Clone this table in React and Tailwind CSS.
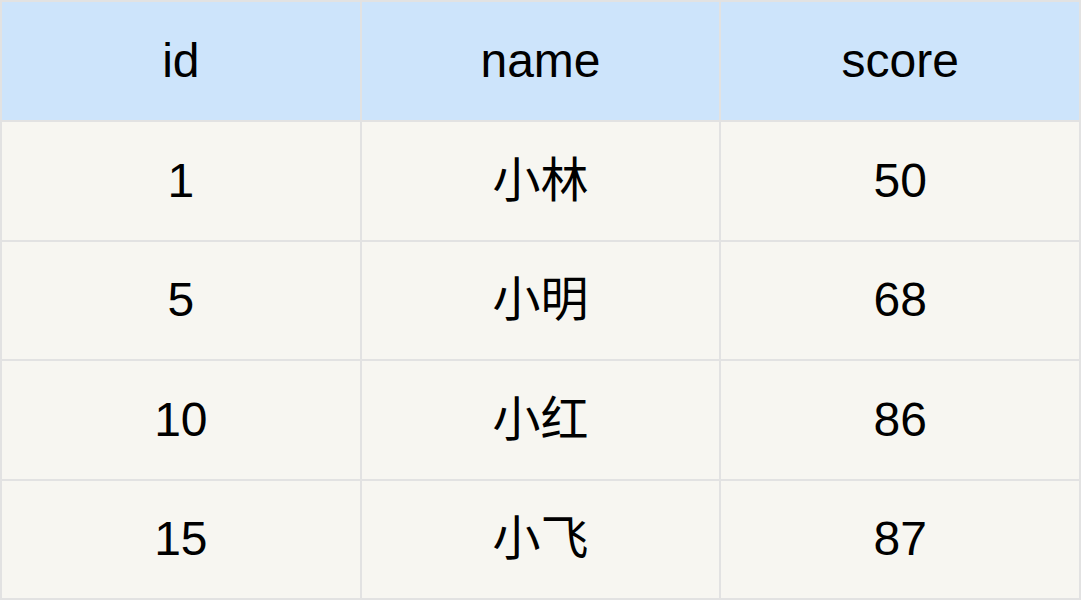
const header = ['id', 'name', 'score']
const rows = [
  ['1', '小林', '50'],
  ['5', '小明', '68'],
  ['10', '小红', '86'],
  ['15', '小飞', '87'],
]

export default function App() {
  return (
    <div className="w-[1084px] h-[604px] bg-white" style={{ fontFamily: '"Liberation Sans", "Noto Sans CJK SC", sans-serif' }}>
      <div className="w-[1081px] h-[600px] grid grid-cols-3 grid-rows-[118px_repeat(4,1fr)] gap-[2px] p-[2px] bg-[#e2e2e2] text-[48px] text-black">
        {header.map(h => (
          <div key={h} className="flex items-center justify-center bg-[#cde4fb]">{h}</div>
        ))}
        {rows.map(r =>
          r.map((c, i) => (
            <div key={r[0] + '-' + i} className="flex items-center justify-center bg-[#f7f6f1]">{c}</div>
          ))
        )}
      </div>
    </div>
  )
}
